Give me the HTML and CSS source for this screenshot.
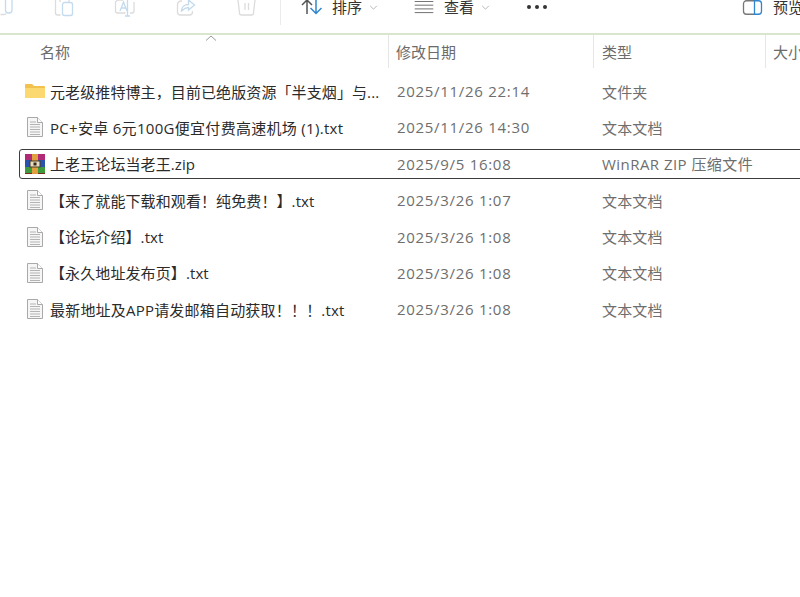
FILE: index.html
```html
<!DOCTYPE html>
<html lang="zh-CN">
<head>
<meta charset="utf-8">
<title>文件资源管理器</title>
<link rel="stylesheet" href="styles.css">
</head>
<body>
<div class="toolbar">
  <div class="tool-icons">
    <svg class="ti ti-cut" viewBox="0 0 14 17"><path d="M0.500 14.500H3a3 3 0 0 0 3-1"/><path class="blue" d="M5.500 0v10a3 3 0 0 0 3 3H9a3 3 0 0 0 3-3V0"/></svg>
    <svg class="ti ti-copy" viewBox="0 0 20 17"><path d="M1.500 0v13a2 2 0 0 0 2 2h3"/><path d="M6 2V0M15 2V0"/><rect class="blue" x="8.500" y="2.500" width="10" height="13" rx="2"/></svg>
    <svg class="ti ti-rename" viewBox="0 0 22 17"><path d="M9 0H3.500L1.500 2v9a2 2 0 0 0 2 2h8M16 13h2a2 2 0 0 0 2-2V2"/><path class="blue" d="M6 11l3.500-9 3.500 9M7 8h5M13.500 0v16M11 16h5"/></svg>
    <svg class="ti ti-share" viewBox="0 0 20 17"><path d="M6 1H5a4 4 0 0 0-3.500 4v7a3 3 0 0 0 3 3h9a3 3 0 0 0 3-3v-1"/><path class="blue" d="M5.500 11c0-4 3-6.500 7-6.500V0l6 5-6 5V7.500c-3 0-5 1.500-7 3.500z"/></svg>
    <svg class="ti ti-trash" viewBox="0 0 19 17"><path d="M1 0l1.500 13a2 2 0 0 0 2 2h10a2 2 0 0 0 2-2L18 0M8 3v7M11.500 3v7"/></svg>
  </div>
  <div class="divider"></div>
  <div class="cmd cmd-sort">
    <svg class="sort-icon" viewBox="0 0 21 15"><path class="dark" d="M6 14V0M1 5l5-5 5 5"/><path class="blue" d="M15 0v14M9.500 8l5.500 5.500L20.500 8"/></svg>
    <span class="cmd-label">排序</span>
    <svg class="chev" viewBox="0 0 10 6"><path d="M1 1l4 4 4-4"/></svg>
  </div>
  <div class="cmd cmd-view">
    <svg class="view-icon" viewBox="0 0 20 14"><path d="M0 .500h20M0 4.500h20M0 8.500h20M0 12.500h20"/></svg>
    <span class="cmd-label">查看</span>
    <svg class="chev" viewBox="0 0 10 6"><path d="M1 1l4 4 4-4"/></svg>
  </div>
  <div class="more"><i></i><i></i><i></i></div>
  <div class="cmd cmd-preview">
    <svg class="preview-icon" viewBox="0 0 20 15"><path class="grey" d="M12 .750H4A3 3 0 0 0 1 3.750v7.500a3 3 0 0 0 3 3h8"/><path class="blue" d="M12 .750h4a3 3 0 0 1 3 3v7.500a3 3 0 0 1-3 3h-4z"/></svg>
    <span class="cmd-label">预览</span>
  </div>
</div>

<div class="header">
  <svg class="sort-caret" viewBox="0 0 12 6"><path d="M1 5.500l5-4.500 5 4.500"/></svg>
  <div class="col col-name">名称</div>
  <div class="col col-date">修改日期</div>
  <div class="col col-type">类型</div>
  <div class="col col-size">大小</div>
</div>

<div class="rows">
  <div class="row">
    <svg class="ico" viewBox="0 0 20 16"><path class="folder-back" d="M0 2a1 1 0 0 1 1-1h6l2 2h10a1 1 0 0 1 1 1v10a1 1 0 0 1-1 1H1a1 1 0 0 1-1-1z"/><path class="folder-front" d="M0 5h20v9a1 1 0 0 1-1 1H1a1 1 0 0 1-1-1z"/></svg>
    <span class="name">元老级推特博主，目前已绝版资源「半支烟」与...</span>
    <span class="date">2025/11/26 22:14</span>
    <span class="type">文件夹</span>
  </div>
  <div class="row">
    <svg class="ico doc" viewBox="0 0 16 20"><use href="#doc"/></svg>
    <span class="name name-wide">PC+安卓 6元100G便宜付费高速机场 (1).txt</span>
    <span class="date">2025/11/26 14:30</span>
    <span class="type">文本文档</span>
  </div>
  <div class="row selected">
    <svg class="ico" viewBox="0 0 20 20">
      <rect x="0" y="0" width="20" height="6" fill="#b02a78"/>
      <rect x="0" y="6" width="20" height="7" fill="#2a53b0"/>
      <rect x="0" y="13" width="20" height="6" fill="#3f9a3c"/>
      <rect x="0" y="19" width="20" height="1" fill="#7a2f1c"/>
      <rect x="7" y="0" width="6" height="20" fill="#e0a040"/>
      <rect x="5" y="7" width="10" height="6" fill="#e8dcc0" stroke="#4a3a20"/>
      <rect x="8.500" y="8.500" width="3" height="3" fill="#33281c"/>
    </svg>
    <span class="name">上老王论坛当老王.zip</span>
    <span class="date">2025/9/5 16:08</span>
    <span class="type type-wide">WinRAR ZIP 压缩文件</span>
  </div>
  <div class="row">
    <svg class="ico doc" viewBox="0 0 16 20"><use href="#doc"/></svg>
    <span class="name">【来了就能下载和观看！纯免费！】.txt</span>
    <span class="date">2025/3/26 1:07</span>
    <span class="type">文本文档</span>
  </div>
  <div class="row">
    <svg class="ico doc" viewBox="0 0 16 20"><use href="#doc"/></svg>
    <span class="name">【论坛介绍】.txt</span>
    <span class="date">2025/3/26 1:08</span>
    <span class="type">文本文档</span>
  </div>
  <div class="row">
    <svg class="ico doc" viewBox="0 0 16 20"><use href="#doc"/></svg>
    <span class="name">【永久地址发布页】.txt</span>
    <span class="date">2025/3/26 1:08</span>
    <span class="type">文本文档</span>
  </div>
  <div class="row">
    <svg class="ico doc" viewBox="0 0 16 20"><use href="#doc"/></svg>
    <span class="name name-mid">最新地址及APP请发邮箱自动获取！！！.txt</span>
    <span class="date">2025/3/26 1:08</span>
    <span class="type">文本文档</span>
  </div>
</div>

<svg class="defs" width="0" height="0">
  <symbol id="doc" viewBox="0 0 16 20">
    <path d="M.5.500h10l5 5v14H.5z" fill="#f6f6f6" stroke="#a9a9a9"/>
    <path d="M10.500.500v5h5" fill="#fff" stroke="#a9a9a9"/>
    <path d="M3 5h6M3 7.500h10M3 10h10M3 12.500h10M3 15h10M3 17.500h10" stroke="#b4b4b4" fill="none"/>
  </symbol>
</svg>
</body>
</html>
```

FILE: styles.css
```css
html, body {
  margin: 0;
  padding: 0;
  width: 800px;
  height: 597px;
  overflow: hidden;
  background: #fff;
  font-family: "Open Sans", "Noto Sans CJK SC", "Liberation Sans", sans-serif;
  color: #2b2b2b;
}
.toolbar {
  height: 33px;
  box-sizing: content-box;
  border-bottom: 2px solid #d8e6cc;
  display: flex;
  align-items: flex-start;
  position: relative;
  overflow: hidden;
}
.tool-icons {
  width: 280px;
  flex: none;
  display: flex;
  height: 17px;
}
.ti {
  height: 17px;
  fill: none;
  stroke: #dcdcdc;
  stroke-width: 1.300;
  flex: none;
}
.ti .blue { stroke: #c4daee; }
.ti-cut { width: 14px; }
.ti-copy { width: 20px; margin-left: 40px; }
.ti-rename { width: 22px; margin-left: 40px; }
.ti-share { width: 20px; margin-left: 40px; }
.ti-trash { width: 19px; margin-left: 41px; }
.divider {
  width: 1px;
  height: 25px;
  background: #ebebeb;
  flex: none;
}
.cmd {
  display: flex;
  align-items: center;
  flex: none;
  height: 14px;
}
.cmd-label {
  font-size: 15px;
  line-height: 14px;
  color: #333;
}
.cmd-sort { margin-left: 20px; }
.sort-icon {
  width: 21px;
  height: 15px;
  margin-right: 10px;
  fill: none;
  stroke-width: 1.500;
}
.sort-icon .dark { stroke: #555; }
.sort-icon .blue { stroke: #2f86d0; }
.chev {
  width: 9px;
  height: 5px;
  margin-left: 7px;
  fill: none;
  stroke: #aaa;
  stroke-width: 1;
}
.cmd-view { margin-left: 36px; }
.view-icon {
  width: 20px;
  height: 13px;
  margin-right: 10px;
  fill: none;
  stroke: #666;
  stroke-width: 1;
}
.more {
  display: flex;
  gap: 4px;
  margin-left: 37px;
  margin-top: 5px;
  flex: none;
}
.more i {
  width: 4px;
  height: 4px;
  border-radius: 50%;
  background: #333;
}
.cmd-preview { margin-left: 195px; }
.preview-icon {
  width: 21px;
  height: 15px;
  margin-right: 10px;
  fill: none;
  stroke-width: 1.300;
}
.preview-icon .grey { stroke: #777; }
.preview-icon .blue { stroke: #2f86d0; }

.header {
  display: flex;
  height: 33px;
  position: relative;
}
.sort-caret {
  position: absolute;
  left: 205px;
  top: 0;
  width: 12px;
  height: 6px;
  fill: none;
  stroke: #999;
  stroke-width: 1;
}
.col {
  font-size: 15px;
  line-height: 35px;
  height: 33px;
  color: #6b6b6b;
  box-sizing: border-box;
  border-right: 1px solid #e6e6e6;
  flex: none;
  white-space: nowrap;
  overflow: hidden;
}
.col-name { width: 389px; padding-left: 40px; }
.col-date { width: 205px; padding-left: 7px; }
.col-type { width: 172px; padding-left: 8px; }
.col-size { width: 34px; padding-left: 7px; border-right: 0; }

.rows {
  padding-top: 8px;
  display: flex;
  flex-direction: column;
  gap: 6.400px;
}
.row {
  height: 30px;
  display: flex;
  align-items: center;
  box-sizing: border-box;
  font-size: 15px;
  white-space: nowrap;
  position: relative;
  padding-left: 25px;
}
.row.selected {
  margin-left: 19px;
  padding-left: 5px;
  width: 790px;
  border: 1px solid #3c3c3c;
  border-radius: 3px;
}
.ico {
  width: 20px;
  height: 20px;
  flex: none;
  margin-right: 5px;
}
.ico.doc { width: 16px; margin-left: 2px; margin-right: 7px; }
.name { width: 347px; flex: none; overflow: hidden; color: #2b2b2b; letter-spacing: .1px; }
.name-wide { letter-spacing: .3px; }
.name-mid { letter-spacing: .2px; }
.date { width: 205px; flex: none; color: #6e6e6e; letter-spacing: .7px; }
.type { flex: none; color: #6e6e6e; letter-spacing: .15px; }
.type-wide { letter-spacing: .45px; }
.folder-back { fill: #f2c14e; }
.folder-front { fill: #fbd970; }
.defs { position: absolute; }
```
